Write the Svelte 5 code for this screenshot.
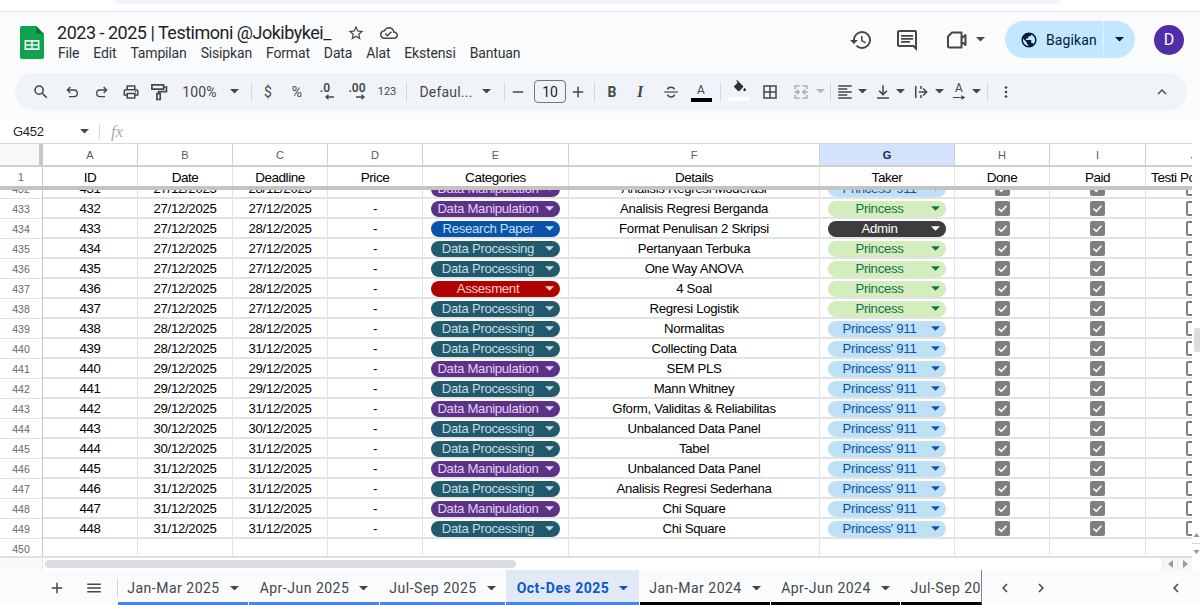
<script>
  const P = 'Data Processing', M = 'Data Manipulation', R = 'Research Paper', A = 'Assesment';
  const pr = 'Princess', p9 = "Princess' 911", ad = 'Admin';
  const rows = [
    [431,'27/12/2025','28/12/2025',M,'Analisis Regresi Moderasi',p9],
    [432,'27/12/2025','27/12/2025',M,'Analisis Regresi Berganda',pr],
    [433,'27/12/2025','28/12/2025',R,'Format Penulisan 2 Skripsi',ad],
    [434,'27/12/2025','27/12/2025',P,'Pertanyaan Terbuka',pr],
    [435,'27/12/2025','27/12/2025',P,'One Way ANOVA',pr],
    [436,'27/12/2025','28/12/2025',A,'4 Soal',pr],
    [437,'27/12/2025','27/12/2025',P,'Regresi Logistik',pr],
    [438,'28/12/2025','28/12/2025',P,'Normalitas',p9],
    [439,'28/12/2025','31/12/2025',P,'Collecting Data',p9],
    [440,'29/12/2025','29/12/2025',M,'SEM PLS',p9],
    [441,'29/12/2025','29/12/2025',P,'Mann Whitney',p9],
    [442,'29/12/2025','31/12/2025',M,'Gform, Validitas & Reliabilitas',p9],
    [443,'30/12/2025','30/12/2025',P,'Unbalanced Data Panel',p9],
    [444,'30/12/2025','31/12/2025',P,'Tabel',p9],
    [445,'31/12/2025','31/12/2025',M,'Unbalanced Data Panel',p9],
    [446,'31/12/2025','31/12/2025',P,'Analisis Regresi Sederhana',p9],
    [447,'31/12/2025','31/12/2025',M,'Chi Square',p9],
    [448,'31/12/2025','31/12/2025',P,'Chi Square',p9]
  ];
  const catClass = { [P]:'c-proc', [M]:'c-man', [R]:'c-res', [A]:'c-ass' };
  const takerClass = { [pr]:'t-pr', [p9]:'t-911', [ad]:'t-ad' };
  const cols = ['A','B','C','D','E','F','G','H','I','J'];
  const heads = ['ID','Date','Deadline','Price','Categories','Details','Taker','Done','Paid','Testi Postingan'];
  const tabs = [
    { n:'Jan-Mar 2025', w:130, c:'blue' }, { n:'Apr-Jun 2025', w:130, c:'blue' }, { n:'Jul-Sep 2025', w:125, c:'blue' },
    { n:'Oct-Des 2025', w:133, c:'blue', on:true }, { n:'Jan-Mar 2024', w:130, c:'black' }, { n:'Apr-Jun 2024', w:129, c:'black' }
  ];
  const menu = ['File','Edit','Tampilan','Sisipkan','Format','Data','Alat','Ekstensi','Bantuan'];
  const tools = [
    ['search',31],['undo',31],['redo',29],['print',30],['paint',26],['t:100%',55],['caret',14],['sep',20],
    ['t:$',14],['t:%',44],['dec0',12],['dec00',52],['n:123',8],['sep',30],['t:Defaul...',50],['caret',30],['sep',6],
    ['minus',22],['box',42],['plus',14],['sep',18],['bold',18],['italic',38],['strike',24],['color',36],['sep',2],
    ['fill',36],['borders',26],['merge',36],['caretoff',2],['sep',18],['align',12],['caret',22],['valign',20],['caret',14],
    ['wrap',28],['caret',8],['rotate',32],['caret',2],['sep',20],['more',18]
  ];
</script>

{#snippet caret()}<svg class="caret" viewBox="0 0 10 5"><path d="M0 0h10L5 5z"/></svg>{/snippet}

<div class="page">
  <div class="chrome"><div class="chrome-shape"></div></div>

  <header class="head">
    <svg class="logo" viewBox="0 0 24 33">
      <path d="M2 0h14l8 8v23a2 2 0 0 1-2 2H2a2 2 0 0 1-2-2V2a2 2 0 0 1 2-2z" fill="#0fa24f"/>
      <path d="M16 0l8 8h-6a2 2 0 0 1-2-2z" fill="#0a7a3a"/>
      <path d="M4.500 14h15v10h-15zm1.700 1.700v2.500h5v-2.500zm6.600 0v2.500h5v-2.500zm-6.600 4.100v2.500h5v-2.500zm6.600 0v2.500h5v-2.500z" fill="#f1f1f1" fill-rule="evenodd"/>
    </svg>
    <div class="titles">
      <div class="title-row">
        <span class="title">2023 - 2025 | Testimoni @Jokibykei_</span>
        <svg class="star" viewBox="0 0 24 24"><path d="M22 9.24l-7.19-.62L12 2 9.19 8.63 2 9.24l5.46 4.73L5.82 21 12 17.27 18.18 21l-1.63-7.03L22 9.24zM12 15.4l-3.76 2.27 1-4.28-3.32-2.88 4.38-.38L12 6.1l1.71 4.04 4.38.38-3.32 2.88 1 4.28L12 15.4z"/></svg>
        <svg class="cloud" viewBox="0 0 24 24"><path d="M19.35 10.04C18.67 6.59 15.64 4 12 4 9.11 4 6.6 5.64 5.35 8.04 2.34 8.36 0 10.91 0 14c0 3.31 2.69 6 6 6h13c2.76 0 5-2.24 5-5 0-2.64-2.05-4.78-4.65-4.96zM19 18H6c-2.21 0-4-1.79-4-4 0-2.05 1.53-3.76 3.56-3.97l1.07-.11.5-.95C8.08 7.14 9.94 6 12 6c2.62 0 4.88 1.86 5.39 4.43l.3 1.5 1.53.11c1.56.1 2.78 1.41 2.78 2.96 0 1.65-1.35 3-3 3zm-9-3.82l-2.09-2.09L6.5 13.5 10 17l6.01-6.01-1.41-1.41z"/></svg>
      </div>
      <nav class="menu">{#each menu as m}<span>{m}</span>{/each}</nav>
    </div>
    <div class="actions">
      <svg class="act history" viewBox="0 0 24 24"><path d="M13 3a9 9 0 0 0-9 9H1l3.89 3.89.07.14L9 12H6c0-3.87 3.13-7 7-7s7 3.13 7 7-3.13 7-7 7c-1.93 0-3.68-.79-4.94-2.06l-1.42 1.42A8.954 8.954 0 0 0 13 21a9 9 0 0 0 0-18zm-1 5v5l4.28 2.54.72-1.21-3.5-2.08V8H12z"/></svg>
      <svg class="act comment" viewBox="0 0 24 24"><path d="M20 2H4c-1.1 0-2 .9-2 2v13c0 1.1.9 2 2 2h14l4 4V4c0-1.1-.9-2-2-2zm0 16.2L18.8 17H4V4h16zM6 7h12v1.800H6zm0 3h12v1.800H6zm0 3h9v1.800H6z"/></svg>
      <svg class="act video" viewBox="0 0 24 24"><path d="M7 4.500h9.500v15H4.500a1.500 1.500 0 0 1-1.500-1.500V8.500zM16.500 10.500l4-3.500v10l-4-3.500" fill="none" stroke="#444746" stroke-width="2" stroke-linejoin="round"/></svg>
      <span class="vcaret">{@render caret()}</span>
      <div class="share">
        <span class="share-main">
          <svg viewBox="0 0 24 24"><path d="M12 2C6.48 2 2 6.48 2 12s4.48 10 10 10 10-4.48 10-10S17.52 2 12 2zm-1 17.93c-3.95-.49-7-3.85-7-7.93 0-.62.08-1.21.21-1.79L9 15v1c0 1.1.9 2 2 2v1.93zm6.9-2.54c-.26-.81-1-1.39-1.9-1.39h-1v-3c0-.55-.45-1-1-1H8v-2h2c.55 0 1-.45 1-1V7h2c1.1 0 2-.9 2-2v-.41c2.93 1.19 5 4.06 5 7.41 0 2.08-.8 3.97-2.1 5.39z"/></svg>
          Bagikan
        </span>
        <span class="share-drop">{@render caret()}</span>
      </div>
      <div class="avatar">D</div>
    </div>
  </header>

  <div class="toolbar">
    {#each tools as [k, w]}
      <span class="tool" style="width:{w}px">
        {#if k === 'sep'}<i class="sep"></i>
        {:else if k === 'caret'}{@render caret()}
        {:else if k === 'caretoff'}<span class="off">{@render caret()}</span>
        {:else if k.startsWith('t:')}<span class="tt">{k.slice(2)}</span>
        {:else if k.startsWith('n:')}<span class="tn">{k.slice(2)}</span>
        {:else if k === 'box'}<span class="box">10</span>
        {:else if k === 'bold'}<b class="fmt">B</b>
        {:else if k === 'italic'}<i class="fmt ital">I</i>
        {:else if k === 'color'}<span class="colorA"><span>A</span><i></i></span>
        {:else if k === 'dec0'}<span class="dec"><span>.0</span><svg viewBox="0 0 10 6"><path d="M10 3H2M4.500.7L2 3l2.500 2.300" fill="none" stroke="#444746" stroke-width="1.300"/></svg></span>
        {:else if k === 'dec00'}<span class="dec"><span>.00</span><svg viewBox="0 0 10 6"><path d="M0 3h8M5.500.7L8 3 5.500 5.300" fill="none" stroke="#444746" stroke-width="1.300"/></svg></span>
        {:else if k === 'search'}<svg class="ic" viewBox="0 0 24 24"><path d="M15.5 14h-.79l-.28-.27A6.471 6.471 0 0 0 16 9.5 6.5 6.5 0 1 0 9.5 16c1.61 0 3.09-.59 4.23-1.57l.27.28v.79l5 4.99L20.49 19l-4.99-5zm-6 0C7.01 14 5 11.99 5 9.5S7.01 5 9.5 5 14 7.01 14 9.5 11.99 14 9.5 14z"/></svg>
        {:else if k === 'undo'}<svg class="ic sm" viewBox="0 0 24 24"><path class="ln" d="M9.500 4.500L5 9l4.500 4.500M5 9h10a5 5 0 0 1 0 10H7.500"/></svg>
        {:else if k === 'redo'}<svg class="ic sm" viewBox="0 0 24 24"><path class="ln" d="M14.500 4.500L19 9l-4.500 4.500M19 9H9a5 5 0 0 0 0 10h7.500"/></svg>
        {:else if k === 'print'}<svg class="ic" viewBox="0 0 24 24"><path d="M19 8h-1V3H6v5H5c-1.66 0-3 1.34-3 3v6h4v4h12v-4h4v-6c0-1.66-1.34-3-3-3zM8 5h8v3H8V5zm8 12v2H8v-4h8v2zm2-2v-2H6v2H4v-4c0-.55.45-1 1-1h14c.55 0 1 .45 1 1v4h-2z"/><circle cx="18" cy="11.500" r="1"/></svg>
        {:else if k === 'paint'}<svg class="ic lg" viewBox="0 0 24 24"><path class="ln" d="M3.500 3.500h14v5h-14zM17.500 6H21v5.500h-9.500V14M9.500 14h4v7h-4z"/></svg>
        {:else if k === 'minus'}<svg class="ic" viewBox="0 0 24 24"><path d="M5 11h14v2H5z"/></svg>
        {:else if k === 'plus'}<svg class="ic" viewBox="0 0 24 24"><path d="M19 13h-6v6h-2v-6H5v-2h6V5h2v6h6z"/></svg>
        {:else if k === 'strike'}<svg class="ic" viewBox="0 0 24 24"><path d="M3 11.200h18v1.600H3z"/><path class="ln" d="M16.500 8.500C16 6.500 14.300 5.500 12 5.500S7.500 6.700 7.500 8.600M7.500 15.500C8 17.500 9.700 18.500 12 18.500s4.500-1.200 4.500-3.100"/></svg>
        {:else if k === 'fill'}<span class="fillwrap"><svg class="ic fillic" viewBox="0 0 24 24"><path d="M16.560 8.940 7.620 0 6.210 1.410l2.380 2.380-5.150 5.150a1.500 1.500 0 0 0 0 2.120l5.500 5.500c.29.290.68.440 1.060.440s.77-.150 1.060-.440l5.500-5.500c.590-.580.590-1.530 0-2.120zM19 11.500s-2 2.170-2 3.500a2 2 0 1 0 4 0c0-1.330-2-3.500-2-3.500z"/></svg><i></i></span>
        {:else if k === 'borders'}<svg class="ic" viewBox="0 0 24 24"><path d="M3 3v18h18V3zm8 16H5v-6h6zm0-8H5V5h6zm8 8h-6v-6h6zm0-8h-6V5h6z"/></svg>
        {:else if k === 'merge'}<svg class="ic dim" viewBox="0 0 24 24"><path class="ln" d="M4 8V4h6M14 4h6v4M4 16v4h6M14 20h6v-4M3 12h6M6.500 9l3 3-3 3M21 12h-6M17.500 9l-3 3 3 3"/></svg>
        {:else if k === 'align'}<svg class="ic" viewBox="0 0 24 24"><path d="M3 3h18v2H3zm0 4h12v2H3zm0 4h18v2H3zm0 4h12v2H3zm0 4h18v2H3z"/></svg>
        {:else if k === 'valign'}<svg class="ic" viewBox="0 0 24 24"><path d="M4 19h16v2H4zM11 3h2v10l3.500-3.500L18 11l-6 6-6-6 1.500-1.500L11 13z"/></svg>
        {:else if k === 'wrap'}<svg class="ic" viewBox="0 0 24 24"><path d="M4 4h2v16H4zM11 4h2v4h-2zm0 12h2v4h-2zm-2-5h8.200l-3-3 1.400-1.400L21 12l-5.400 5.400-1.400-1.400 3-3H9z"/></svg>
        {:else if k === 'rotate'}<span class="rot"><span>A</span><svg viewBox="0 0 14 5"><path d="M0 2.500h11M9 .5l3 2-3 2" fill="none" stroke="#444746" stroke-width="1.300"/></svg></span>
        {:else if k === 'more'}<svg class="ic" viewBox="0 0 24 24"><circle cx="12" cy="6" r="1.800"/><circle cx="12" cy="12" r="1.800"/><circle cx="12" cy="18" r="1.800"/></svg>
        {/if}
      </span>
    {/each}
    <span class="tool collapse"><svg class="ic" viewBox="0 0 24 24"><path d="M7.410 15.410 12 10.830l4.590 4.580L18 14l-6-6-6 6z"/></svg></span>
  </div>

  <div class="formula">
    <span class="namebox">G452</span>
    {@render caret()}
    <i class="fsep"></i>
    <span class="fx">fx</span>
  </div>

  <div class="sheet">
    <div class="grid-wrap">
      <div class="grid heads">
        <div class="corner"></div>
        {#each cols as c}<div class="col" class:sel={c === 'G'}>{c}</div>{/each}
      </div>
      <div class="grid frozen">
        <div class="rn">1</div>
        {#each heads as h}<div class="hc">{h}</div>{/each}
      </div>
      <div class="freeze"></div>
      <div class="body">
        {#each rows as r, i}
          <div class="grid row" class:first={i === 0}>
            <div class="rn">{r[0] + 1}</div>
            <div class="c">{r[0]}</div>
            <div class="c">{r[1]}</div>
            <div class="c">{r[2]}</div>
            <div class="c">-</div>
            <div class="c"><span class="chip {catClass[r[3]]}"><span class="cht">{r[3]}</span>{@render caret()}</span></div>
            <div class="c">{r[4]}</div>
            <div class="c"><span class="chip {takerClass[r[5]]}"><span class="cht">{r[5]}</span>{@render caret()}</span></div>
            <div class="c"><svg class="check" viewBox="0 0 15 15"><rect width="15" height="15" rx="2" fill="#7f7f7f"/><path d="M3.500 7.500l2.800 2.800 5.200-5.600" fill="none" stroke="#fff" stroke-width="1.500"/></svg></div>
            <div class="c"><svg class="check" viewBox="0 0 15 15"><rect width="15" height="15" rx="2" fill="#7f7f7f"/><path d="M3.500 7.500l2.800 2.800 5.200-5.600" fill="none" stroke="#fff" stroke-width="1.500"/></svg></div>
            <div class="c"><span class="uncheck"></span></div>
          </div>
        {/each}
        <div class="grid row">
          <div class="rn">450</div>
          {#each cols as c}<div class="c"></div>{/each}
        </div>
      </div>
      <div class="hscroll">
        <div class="hs-left"></div>
        <div class="thumb"></div>
        <div class="hs-btn first-btn"><svg viewBox="0 0 5 8"><path d="M5 0v8L0 4z"/></svg></div>
        <div class="hs-btn"><svg viewBox="0 0 5 8"><path d="M0 0v8l5-4z"/></svg></div>
      </div>
    </div>
    <div class="vscroll">
      <div class="vthumb"></div>
      <svg class="varrow up" viewBox="0 0 8 5"><path d="M0 5h8L4 0z"/></svg>
      <i class="vline"></i>
      <svg class="varrow" viewBox="0 0 8 5"><path d="M0 0h8L4 5z"/></svg>
    </div>
  </div>

  <footer class="tabs">
    <svg class="ic add" viewBox="0 0 24 24"><path d="M19 13h-6v6h-2v-6H5v-2h6V5h2v6h6z"/></svg>
    <svg class="ic all" viewBox="0 0 24 24"><path d="M3 6h18v2H3zm0 5h18v2H3zm0 5h18v2H3z"/></svg>
    <i class="tsep"></i>
    {#each tabs as t}
      <div class="tab {t.c}" class:on={t.on} style="width:{t.w}px"><span>{t.n}</span>{@render caret()}</div>
    {/each}
    <div class="tab black cut"><span>Jul-Sep 20</span></div>
    <svg class="nav first-nav" viewBox="0 0 24 24"><path d="M15.410 7.410 14 6l-6 6 6 6 1.410-1.410L10.830 12z"/></svg>
    <svg class="nav" viewBox="0 0 24 24"><path d="M10 6 8.590 7.410 13.170 12l-4.580 4.590L10 18l6-6z"/></svg>
    <svg class="nav last-nav" viewBox="0 0 24 24"><path d="M15.410 7.410 14 6l-6 6 6 6 1.410-1.410L10.830 12z"/></svg>
  </footer>
</div>

<style>
  :global(body) { margin: 0; background: #fff; }
  .page { width: 1200px; height: 605px; overflow: hidden; display: flex; flex-direction: column; background: #f9fbfd; font-family: Roboto, "Liberation Sans", sans-serif; color: #1f1f1f; }
  svg { display: block; fill: #444746; }
  .caret { width: 9px; height: 4.500px; fill: #444746; flex: none; }

  .chrome { height: 11px; background: #fff; border-bottom: 1px solid #e8eaed; }
  .chrome-shape { margin-left: 115px; width: 945px; height: 4px; background: #edf2fb; border-radius: 0 0 12px 12px; }

  .head { height: 61px; display: flex; box-sizing: border-box; padding-left: 20px; }
  .logo { width: 24px; height: 33px; margin-top: 14px; }
  .titles { margin-left: 13px; }
  .title-row { display: flex; align-items: center; height: 21px; margin-top: 10px; }
  .title { font-size: 18px; letter-spacing: -.49px; }
  .star { width: 18px; height: 18px; margin-left: 16px; }
  .cloud { width: 18px; height: 18px; margin-left: 15px; }
  .menu { display: flex; gap: 14px; font-size: 14px; margin-top: 1px; margin-left: 1px; line-height: 18px; color: #303336; letter-spacing: -.16px; }

  .actions { margin-left: auto; display: flex; align-items: center; height: 37px; margin-top: 9px; padding-right: 16px; }
  .act { width: 24px; height: 24px; }
  .history { margin-right: 21.500px; }
  .comment { margin-right: 26.500px; }
  .vcaret { margin-left: 7px; margin-right: 20px; }
  .share { width: 130px; height: 37px; display: flex; border-radius: 19px; overflow: hidden; background: #c2e7ff; font-size: 14px; color: #001d35; }
  .share-main { width: 99px; display: flex; align-items: center; gap: 8px; padding-left: 15px; box-sizing: border-box; border-right: 1px solid #e3f2fd; letter-spacing: .1px; white-space: nowrap; }
  .share-main svg { width: 18px; height: 18px; fill: #001d35; }
  .share-drop { flex: 1; display: flex; align-items: center; justify-content: center; }
  .share-drop .caret { fill: #001d35; }
  .avatar { width: 30px; height: 30px; margin-left: 19px; border-radius: 50%; background: #512da8; color: #fff; font-size: 16px; display: flex; align-items: center; justify-content: center; }

  .toolbar { margin-left: 15px; width: 1172px; height: 37px; box-sizing: border-box; padding-left: 10px; background: #f0f4f9; border-radius: 19px; display: flex; align-items: center; flex: none; }
  .tool { flex: none; display: flex; align-items: center; justify-content: center; height: 37px; white-space: nowrap; color: #444746; }
  .collapse { margin-left: auto; margin-right: 15px; width: 20px; }
  .ic { width: 18px; height: 18px; flex: none; }
  .ic.sm { width: 16px; height: 16px; }
  .ic.lg { width: 20px; height: 20px; }
  .ln { fill: none; stroke: #444746; stroke-width: 2; }
  .dim { opacity: .4; }
  .off .caret { fill: #b4b6b8; }
  .sep { width: 1px; height: 20px; background: #d5d8dc; }
  .tt { font-size: 14px; letter-spacing: .2px; }
  .tn { font-size: 11px; }
  .box { width: 30px; height: 21px; border: 1px solid #747775; border-radius: 4px; display: flex; align-items: center; justify-content: center; font-size: 14px; color: #1f1f1f; }
  .fmt { font-size: 14px; font-style: normal; font-family: Roboto, sans-serif; }
  .ital { font-style: italic; font-weight: 700; font-family: "Liberation Serif", serif; font-size: 16px; }
  .colorA { display: flex; flex-direction: column; align-items: center; font-size: 12px; line-height: 12px; margin-top: 2px; }
  .colorA i { width: 21px; height: 4px; background: #000; margin-top: 2px; }
  .fillwrap { display: flex; flex-direction: column; align-items: center; margin-top: -3px; }
  .fillwrap i { width: 22px; height: 4px; background: #fff; margin-top: 1px; }
  .fillic { width: 16px; height: 16px; margin-left: 1px; }
  .fillic path { fill: #303336; }
  .dec { display: flex; flex-direction: column; align-items: center; font-size: 12px; font-weight: 600; line-height: 10px; margin-top: -1px; }
  .dec svg { width: 10px; height: 6px; margin-left: 7px; margin-top: 1px; }
  .rot { display: flex; flex-direction: column; align-items: center; font-size: 12px; line-height: 11px; }
  .rot svg { width: 13px; height: 5px; margin-top: 1px; }

  .formula { height: 23px; margin-top: 10px; background: #fff; display: flex; align-items: center; padding-left: 13px; flex: none; font-family: "Liberation Sans", sans-serif; }
  .namebox { width: 67px; font-size: 13px; letter-spacing: -.3px; color: #1f1f1f; }
  .fsep { width: 1px; height: 15px; background: #d5d8dc; margin-left: 10px; }
  .fx { font-family: "Liberation Serif", serif; font-style: italic; font-size: 17px; color: #a9a9a9; margin-left: 11px; letter-spacing: -.3px; }

  .sheet { height: 427px; display: flex; background: #fff; flex: none; font-family: "Liberation Sans", Arial, sans-serif; }
  .grid-wrap { width: 1192px; overflow: hidden; flex: none; display: flex; flex-direction: column; }
  .grid { display: grid; grid-template-columns: 43px 95px 95px 95px 95px 146px 251px 135px 95px 96px 96px; width: 1243px; flex: none; }

  .heads { height: 24px; border-top: 1px solid #d9d9d9; box-sizing: border-box; }
  .corner { background: #f8f9fa; border-right: 4px solid #c7c7c7; border-bottom: 2px solid #cfcfcf; box-sizing: border-box; width: 43px; }
  .col { border-right: 1px solid #cfcfcf; border-bottom: 2px solid #cfcfcf; font-size: 11px; color: #575a5c; display: flex; align-items: center; justify-content: center; }
  .col.sel { background: #d3e3fd; color: #0b2a5b; font-weight: 700; }

  .frozen { height: 19px; font-size: 13.500px; letter-spacing: -.45px; }
  .frozen .rn { border-right: 1px solid #c7c7c7; border-bottom: 0; }
  .hc { border-right: 1px solid #e3e3e3; display: flex; align-items: center; justify-content: center; color: #000; white-space: nowrap; overflow: hidden; padding-top: 2px; box-sizing: border-box; }
  .freeze { height: 4px; background: #c4c4c4; flex: none; width: 1243px; }

  .body { height: 368px; overflow: hidden; flex: none; border-bottom: 2px solid #e0e0e0; box-sizing: border-box; }
  .row { height: 20px; font-size: 13.200px; letter-spacing: -.3px; }
  .row.first { margin-top: -11px; }
  .rn { background: #fff; color: #666; font-size: 10.500px; letter-spacing: 0; display: flex; align-items: center; justify-content: center; border-right: 1px solid #c7c7c7; border-bottom: 1px solid #e3e3e3; }
  .c { border-right: 1px solid #e3e3e3; border-bottom: 2px solid #e3e3e3; box-sizing: border-box; display: flex; align-items: center; justify-content: center; color: #000; white-space: nowrap; padding-top: 1px; overflow: hidden; }

  .chip { height: 16px; border-radius: 8px; display: flex; align-items: center; box-sizing: border-box; line-height: 16px; }
  .cht { flex: 1; text-align: center; }
  .chip .caret { width: 9px; height: 5px; margin-right: 6px; }
  .c-man, .c-res, .c-proc, .c-ass { width: 129px; }
  .t-pr, .t-911, .t-ad { width: 118px; }
  .c-man { background: #5a3286; color: #e5cff2; }
  .c-man .caret { fill: #e5cff2; }
  .c-res { background: #0a53a8; color: #bfe1f6; }
  .c-res .caret { fill: #bfe1f6; }
  .c-proc { background: #215a6c; color: #c6dbe1; }
  .c-proc .caret { fill: #c6dbe1; }
  .c-ass { background: #b10202; color: #ffcfc9; }
  .c-ass .caret { fill: #ffcfc9; }
  .t-pr { background: #d4edbc; color: #11734b; }
  .t-pr .caret { fill: #11734b; }
  .t-911 { background: #bfe1f6; color: #0a53a8; }
  .t-911 .caret { fill: #0a53a8; }
  .t-ad { background: #3d3d3d; color: #fff; }
  .t-ad .caret { fill: #fff; }
  .check { width: 15px; height: 15px; }
  .uncheck { width: 15px; height: 15px; box-sizing: border-box; border: 2px solid #7f7f7f; border-radius: 2px; flex: none; }

  .hscroll { height: 12px; display: flex; background: #fff; flex: none; align-items: center; }
  .hs-left { width: 42px; height: 12px; border-right: 1px solid #e3e3e3; background: #f8f9fa; }
  .thumb { width: 471px; height: 8px; border-radius: 4px; background: #dadce0; margin-left: 2px; }
  .hs-btn { width: 14px; height: 12px; background: #f7f7f7; border-left: 1px solid #e8e8e8; display: flex; align-items: center; justify-content: center; }
  .first-btn { margin-left: auto; }
  .hs-btn svg { width: 5px; height: 8px; fill: #9a9a9a; }

  .vscroll { flex: 1; background: #fff; display: flex; flex-direction: column; align-items: center; }
  .vthumb { height: 24px; margin-top: 185px; background: #dadce0; border-radius: 3px 0 0 3px; width: 6px; margin-left: 2px; flex: none; }
  .varrow { width: 7px; height: 4px; fill: #9a9a9a; flex: none; }
  .varrow.up { margin-top: 181px; }
  .vline { width: 8px; height: 1px; background: #c9d7f5; margin-top: 6px; margin-bottom: 6px; flex: none; }

  .tabs { height: 35px; display: flex; align-items: center; background: #f9fbfd; flex: none; font-size: 14px; }
  .add { margin-left: 48px; }
  .all { margin-left: 19px; }
  .tsep { width: 1px; height: 20px; background: #d5d8dc; margin-left: 14px; }
  .tab { height: 35px; box-sizing: border-box; border-bottom: 3px solid #4285f4; margin-right: 1px; display: flex; align-items: center; justify-content: center; gap: 10px; color: #444746; letter-spacing: .5px; white-space: nowrap; flex: none; padding-top: 4px; }
  .tab.black { border-bottom-color: #000; }
  .tab.on { background: #e1e9f7; color: #0b57d0; font-weight: 700; }
  .tab.on .caret { fill: #0b57d0; }
  .tab.cut { width: 81px; justify-content: flex-end; overflow: hidden; border-right: 1px solid #80868b; margin-right: 0; }
  .nav { width: 18px; height: 18px; flex: none; }
  .first-nav { margin-left: 14px; }
  .nav + .nav { margin-left: 18px; }
  .nav.last-nav { margin-left: 117px; }
</style>
